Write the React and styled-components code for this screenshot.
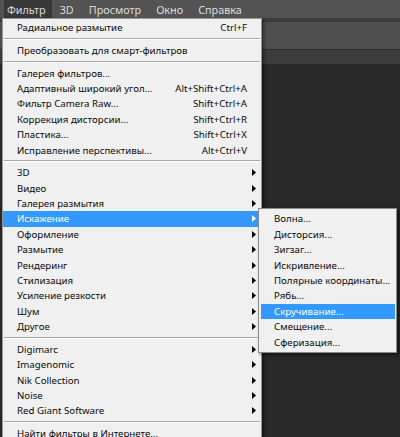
import React from 'react';
import styled, { createGlobalStyle } from 'styled-components';

const GlobalStyle = createGlobalStyle`
  html, body {
    margin: 0;
    padding: 0;
    background: #282828;
  }
  body {
    font-family: "Noto Sans", "Open Sans", "Liberation Sans", sans-serif;
  }
`;

const ROW = 15.4;

const topMenus = ['Фильтр', '3D', 'Просмотр', 'Окно', 'Справка'];

const filterMenu = [
  { label: 'Радиальное размытие', shortcut: 'Ctrl+F' },
  { sep: true },
  { label: 'Преобразовать для смарт-фильтров' },
  { sep: true },
  { label: 'Галерея фильтров...' },
  { label: 'Адаптивный широкий угол...', shortcut: 'Alt+Shift+Ctrl+A' },
  { label: 'Фильтр Camera Raw...', shortcut: 'Shift+Ctrl+A' },
  { label: 'Коррекция дисторсии...', shortcut: 'Shift+Ctrl+R' },
  { label: 'Пластика...', shortcut: 'Shift+Ctrl+X' },
  { label: 'Исправление перспективы...', shortcut: 'Alt+Ctrl+V' },
  { sep: true },
  { label: '3D', sub: true },
  { label: 'Видео', sub: true },
  { label: 'Галерея размытия', sub: true },
  { label: 'Искажение', sub: true, open: true },
  { label: 'Оформление', sub: true },
  { label: 'Размытие', sub: true },
  { label: 'Рендеринг', sub: true },
  { label: 'Стилизация', sub: true },
  { label: 'Усиление резкости', sub: true },
  { label: 'Шум', sub: true },
  { label: 'Другое', sub: true },
  { sep: true },
  { label: 'Digimarc', sub: true },
  { label: 'Imagenomic', sub: true },
  { label: 'Nik Collection', sub: true },
  { label: 'Noise', sub: true },
  { label: 'Red Giant Software', sub: true },
  { sep: true },
  { label: 'Найти фильтры в Интернете...' },
];

const distortMenu = [
  'Волна...',
  'Дисторсия...',
  'Зигзаг...',
  'Искривление...',
  'Полярные координаты...',
  'Рябь...',
  'Скручивание...',
  'Смещение...',
  'Сферизация...',
];

function Arrow({ light }) {
  return (
    <svg width="4" height="7" viewBox="0 0 4 7">
      <polygon points="0,0 4,3.5 0,7" fill={light ? '#ffffff' : '#000000'} />
    </svg>
  );
}

function App() {
  return (
    <Screen>
      <GlobalStyle />
      <MenuBar>
        {topMenus.map((m, i) => (
          <BarItem key={m} active={i === 0}>{m}</BarItem>
        ))}
      </MenuBar>
      <Gap />
      <OptionsBar />
      <TabsBar />
      <Workspace />

      <Dropdown>
        {filterMenu.map((item, i) =>
          item.sep ? (
            <Separator key={i} />
          ) : (
            <Item key={i} active={item.open}>
              <Label>{item.label}</Label>
              <Shortcut>{item.shortcut}</Shortcut>
              <ArrowCell>{item.sub && <Arrow light={item.open} />}</ArrowCell>
              {item.open && (
                <SubMenu>
                  {distortMenu.map((s, j) => (
                    <SubItem key={s} active={j === 6}>{s}</SubItem>
                  ))}
                </SubMenu>
              )}
            </Item>
          )
        )}
      </Dropdown>
    </Screen>
  );
}

const Screen = styled.div`
  position: relative;
  width: 400px;
  height: 437px;
  overflow: hidden;
  display: flex;
  flex-direction: column;
  background: #282828;
`;

const MenuBar = styled.div`
  height: 18px;
  display: flex;
  align-items: stretch;
  gap: 1px;
  padding-left: 4px;
  background: #535353;
`;

const BarItem = styled.div`
  display: flex;
  align-items: center;
  padding: 0 7px;
  font-size: 10.8px;
  color: #dcdcdc;
  background: ${p => (p.active ? '#393939' : 'transparent')};
  &:first-child {
    padding: 0 6px 0 3px;
  }
`;

const Gap = styled.div`
  height: 4px;
  background: #3c3c3c;
`;

const OptionsBar = styled.div`
  height: 27px;
  background: #4f4f4f;
  border-bottom: 1px solid #2e2e2e;
`;

const TabsBar = styled.div`
  height: 14px;
  background: #3c3c3c;
`;

const Workspace = styled.div`
  flex: 1;
  background: #282828;
`;

const Dropdown = styled.div`
  position: absolute;
  top: 18px;
  left: 2px;
  width: 258px;
  padding: 1px 0;
  background: #f0f0f0;
  border: 1px solid #979797;
  box-shadow: 2px 2px 3px rgba(0, 0, 0, 0.45);
`;

const Item = styled.div`
  position: relative;
  height: ${ROW}px;
  display: grid;
  grid-template-columns: 1fr auto 14px;
  align-items: center;
  padding-left: 14px;
  font-size: 9.7px;
  color: ${p => (p.active ? '#ffffff' : '#0a0a0a')};
  background: ${p => (p.active ? '#3399ff' : 'transparent')};
`;

const Label = styled.span`
  white-space: nowrap;
`;

const Shortcut = styled.span`
  white-space: nowrap;
`;

const ArrowCell = styled.span`
  display: flex;
  align-items: center;
  padding-left: 5px;
`;

const Separator = styled.div`
  height: 7.3px;
  display: flex;
  align-items: center;
  padding: 0 1px;
  &::after {
    content: '';
    flex: 1;
    height: 0;
    border-top: 1px solid #a8a8a8;
    border-bottom: 1px solid #ffffff;
  }
`;

const SubMenu = styled.div`
  position: absolute;
  top: -3px;
  left: 255px;
  width: 134px;
  padding: 2px 1px 2px 2px;
  background: #f0f0f0;
  border: 1px solid #8c8c8c;
  box-shadow: 2px 2px 3px rgba(0, 0, 0, 0.5);
  z-index: 2;
`;

const SubItem = styled.div`
  height: ${ROW}px;
  display: flex;
  align-items: center;
  padding-left: 13px;
  font-size: 9.7px;
  white-space: nowrap;
  color: ${p => (p.active ? '#ffffff' : '#0a0a0a')};
  background: ${p => (p.active ? '#3399ff' : 'transparent')};
`;

export default App;
